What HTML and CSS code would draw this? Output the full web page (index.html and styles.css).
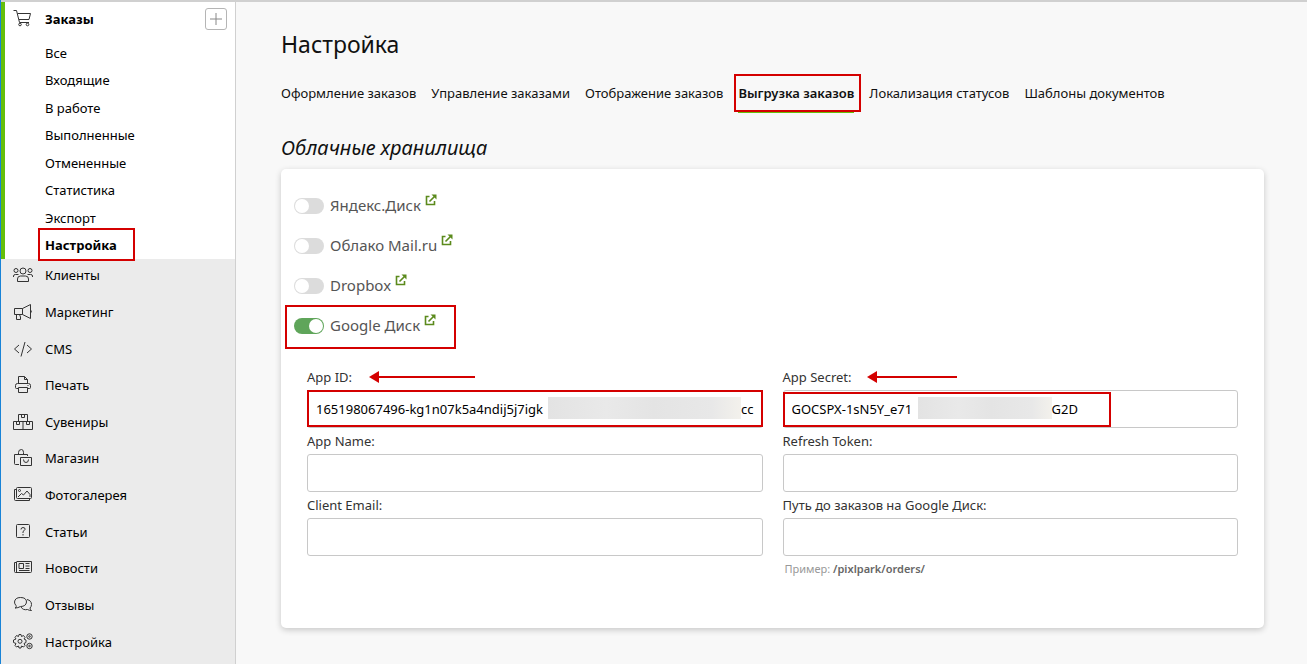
FILE: index.html
```html
<!DOCTYPE html>
<html lang="ru">
<head>
<meta charset="utf-8">
<title>Настройка</title>
<link rel="stylesheet" href="styles.css">
</head>
<body>
<svg class="sprite" aria-hidden="true">
  <symbol id="external" viewBox="0 0 12 12"><path d="M4.500 2.500H1.500V10.500H9.500V7M4.500 7.500L10 2" fill="none" stroke="currentColor" stroke-width="1.600"/><path d="M6.500 .5H11.500V5.500Z" fill="currentColor"/></symbol>
  <symbol id="arrow" viewBox="0 0 106 12"><path d="M8 6H106" stroke="currentColor" stroke-width="2"/><path d="M0 6L10 0V12Z" fill="currentColor"/></symbol>
  <symbol id="arrow-short" viewBox="0 0 90 12"><path d="M8 6H90" stroke="currentColor" stroke-width="2"/><path d="M0 6L10 0V12Z" fill="currentColor"/></symbol>
</svg>
<div class="app">
  <nav class="sidebar">
    <section class="orders">
      <div class="orders-head">
        <svg class="icon" viewBox="0 0 20 20"><path d="M.5 1.500H3.500L6.500 13.500H16M4.500 4.500H17.500L16 10.500H6"/><circle cx="7" cy="15.500" r="1.300"/><circle cx="14.500" cy="15.500" r="1.300"/></svg>
        <a class="orders-title" href="#">Заказы</a>
        <button class="add" type="button" aria-label="Добавить"><svg viewBox="0 0 12 12"><path d="M6 0V12M0 6H12"/></svg></button>
      </div>
      <ul class="submenu">
        <li><a href="#">Все</a></li>
        <li><a href="#">Входящие</a></li>
        <li><a href="#">В работе</a></li>
        <li><a href="#">Выполненные</a></li>
        <li><a href="#">Отмененные</a></li>
        <li><a href="#">Статистика</a></li>
        <li><a href="#">Экспорт</a></li>
        <li><a class="current marked" href="#">Настройка</a></li>
      </ul>
    </section>
    <ul class="menu">
      <li><a href="#"><svg class="icon" viewBox="0 0 20 20"><circle cx="10" cy="6" r="3"/><circle cx="3" cy="5.500" r="2"/><circle cx="17" cy="5.500" r="2"/><path d="M4.500 16.500V14Q4.500 11 7.500 11H12.500Q15.500 11 15.500 14V16.500ZM.5 12V11Q.5 9.500 2.500 9.500H5.500M14.500 9.500H17.500Q19.500 9.500 19.500 11V12"/></svg>Клиенты</a></li>
      <li><a href="#"><svg class="icon" viewBox="0 0 20 20"><path d="M1.500 6.500H9.500L17.500 2.500V16.500L9.500 12.500H1.500ZM9.500 6.500V12.500M17.500 8Q19.500 9.500 17.500 11M3.500 12.500V17.500H7.500V15L6.500 12.500"/></svg>Маркетинг</a></li>
      <li><a href="#"><svg class="icon" viewBox="0 0 20 20"><path d="M6 6L1.500 10L6 14M14 6L18.500 10L14 14M12 3L8 17.500"/></svg>CMS</a></li>
      <li><a href="#"><svg class="icon" viewBox="0 0 20 20"><path d="M5.500 8.500V1.500H11.500L14.500 4.500V8.500M11.500 1.500V4.500H14.500M5 13.500H3.500Q2.500 13.500 2.500 12.500V10.500Q2.500 8.500 4.500 8.500H15.500Q17.500 8.500 17.500 10.500V12.500Q17.500 13.500 16.500 13.500H15M5.500 12.500H14.500V17.500H5.500ZM14.500 10.500H15.500"/></svg>Печать</a></li>
      <li><a href="#"><svg class="icon" viewBox="0 0 20 20"><path d="M.5 9.500H19.500V17.500H.5ZM10 9.500V17.500M5.500 9.500V2.500H14.500V9.500M8.500 2.500V5.500H11.500V2.500M3.500 9.500V12.500H6.500V9.500M13.500 9.500V12.500H16.500V9.500"/></svg>Сувениры</a></li>
      <li><a href="#"><svg class="icon" viewBox="0 0 20 20"><path d="M6 16.500H2.500Q1.500 16.500 1.500 15.500V6.500H14.500V8M5.500 6.500V4.500Q5.500 1.500 8.500 1.500Q10.500 1.500 10.500 4.500V6M7.500 9.500H18.500V17.500H7.500ZM10.500 11.500Q10.500 14.500 13 14.500Q15.500 14.500 15.500 11.500"/></svg>Магазин</a></li>
      <li><a href="#"><svg class="icon" viewBox="0 0 20 20"><path d="M4.500 2.500H17.500Q18.500 2.500 18.500 3.500V12.500Q18.500 13.500 17.500 13.500H4.500Q3.500 13.500 3.500 12.500V3.500Q3.500 2.500 4.500 2.500M3 4.500H1.500V14.500Q1.500 15.500 2.500 15.500H16.500V14M5 12L8.500 8.500L10.500 10L14 6L17 9.500V12"/><circle cx="6.500" cy="5.500" r="1"/></svg>Фотогалерея</a></li>
      <li><a href="#"><svg class="icon" viewBox="0 0 20 20"><rect x="3.500" y="2.500" width="13" height="13" rx="1"/><path d="M8 7.500Q8 5.500 10 5.500Q12.500 5.500 12 7.500Q11.500 8.500 10 9.500V11M10 12V13.500"/></svg>Статьи</a></li>
      <li><a href="#"><svg class="icon" viewBox="0 0 20 20"><path d="M3.500 3.500H18.500V13.500Q18.500 14.500 17.500 14.500H2.500Q1.500 14.500 1.500 13.500V4.500H3.500M3.500 4V14M6 5.500H10.500V10.500H6ZM12.500 5.500H16.500M12.500 8H16.500M12.500 10.500H16.500M6 12.500H16.500"/></svg>Новости</a></li>
      <li><a href="#"><svg class="icon" viewBox="0 0 20 20"><path d="M3 12.500Q3.500 11.500 3 10.500Q1.500 9 1.500 7Q2 2.500 7.500 2.500Q13.500 2.500 13.500 7Q13 11.500 7.500 11.500Q5 13 2 13ZM14 4.500Q18.500 5.500 18.500 9.500Q18.500 11.500 17 13Q17 14.500 18.500 15.500Q16 15.500 14.500 14.500Q10 15.500 8 12"/></svg>Отзывы</a></li>
      <li><a href="#"><svg class="icon" viewBox="0 0 20 20"><path d="M6 2.500H8L8.500 4.500L10.500 3.500L12 5.500L11 7L13 8V10.500L11 11.500L12 13.500L10.500 15L8.500 14L8 16H6L5.500 14L3.500 15L2 13.500L3 11.500L.5 10.500V8L3 7L2 5.500L3.500 3.500L5.500 4.500Z"/><circle cx="7" cy="9.300" r="2"/><circle cx="16.500" cy="4.500" r="2.700"/><circle cx="16.500" cy="4.500" r=".8"/><circle cx="16.500" cy="14" r="2.700"/><circle cx="16.500" cy="14" r=".8"/></svg>Настройка</a></li>
    </ul>
  </nav>
  <main class="main">
    <h1 class="title">Настройка</h1>
    <nav class="tabs">
      <a class="tab" href="#">Оформление заказов</a>
      <a class="tab" href="#">Управление заказами</a>
      <a class="tab" href="#">Отображение заказов</a>
      <a class="tab active" href="#">Выгрузка заказов</a>
      <a class="tab" href="#">Локализация статусов</a>
      <a class="tab" href="#">Шаблоны документов</a>
    </nav>
    <h2 class="subtitle">Облачные хранилища</h2>
    <form class="card">
      <div class="storage"><label><input class="switch" type="checkbox">Яндекс.Диск</label><a class="ext" href="#" aria-label="Яндекс.Диск"><svg><use href="#external"/></svg></a></div>
      <div class="storage"><label><input class="switch" type="checkbox">Облако Mail.ru</label><a class="ext" href="#" aria-label="Облако Mail.ru"><svg><use href="#external"/></svg></a></div>
      <div class="storage"><label><input class="switch" type="checkbox">Dropbox</label><a class="ext" href="#" aria-label="Dropbox"><svg><use href="#external"/></svg></a></div>
      <div class="storage chosen"><label><input class="switch" type="checkbox" checked>Google Диск</label><a class="ext" href="#" aria-label="Google Диск"><svg><use href="#external"/></svg></a></div>
      <div class="fields">
        <div class="field">
          <div class="label-row"><label for="app-id">App ID:</label><svg class="arrow"><use href="#arrow"/></svg></div>
          <div class="control outlined"><input class="value-id" id="app-id" type="text" value="165198067496-kg1n07k5a4ndij5j7igk"><span class="hidden-part"></span><span>cc</span></div>
        </div>
        <div class="field">
          <div class="label-row"><label for="app-secret">App Secret:</label><svg class="arrow short"><use href="#arrow-short"/></svg></div>
          <div class="control outlined part"><input class="value-secret" id="app-secret" type="text" value="GOCSPX-1sN5Y_e71"><span class="hidden-part small"></span><span>G2D</span></div>
        </div>
        <div class="field">
          <div class="label-row"><label for="app-name">App Name:</label></div>
          <input class="control" id="app-name" type="text">
        </div>
        <div class="field">
          <div class="label-row"><label for="token">Refresh Token:</label></div>
          <input class="control" id="token" type="text">
        </div>
        <div class="field">
          <div class="label-row"><label for="email">Client Email:</label></div>
          <input class="control" id="email" type="text">
        </div>
        <div class="field">
          <div class="label-row"><label for="path">Путь до заказов на Google Диск:</label></div>
          <input class="control" id="path" type="text">
          <p class="hint">Пример: <b>/pixlpark/orders/</b></p>
        </div>
      </div>
    </form>
  </main>
</div>
</body>
</html>
```
FILE: styles.css
```css
*, *::before, *::after { box-sizing: border-box; }
body {
  margin: 0;
  background: #f8f8f8;
  color: #111;
  font: 13px/20px "Noto Sans", "Open Sans", sans-serif;
}
a { color: inherit; text-decoration: none; }
ul { margin: 0; padding: 0; list-style: none; }
.sprite { display: none; }
.app {
  display: flex;
  min-height: 100vh;
  border-left: 1px solid #1883d7;
  box-shadow: inset 0 2px #d0d0d0;
  padding-top: 2px;
}
.sidebar {
  flex: none;
  width: 235px;
  background: #ebebeb;
  border-right: 1px solid #d0d0d0;
  color: #000;
}
.orders { background: #fff; border-left: 4px solid #66bf0b; }
.orders-head {
  display: flex;
  align-items: center;
  height: 34px;
  padding: 0 8px;
}
.icon {
  width: 20px;
  height: 20px;
  flex: none;
  margin-right: 12px;
  fill: none;
  stroke: #333;
  stroke-width: 1;
}
.orders-title { flex: 1; font-weight: 700; }
.add {
  display: grid;
  place-items: center;
  width: 22px;
  height: 22px;
  padding: 0;
  background: #fff;
  border: 1px solid #b5b5b5;
  border-radius: 3px;
}
.add svg { width: 12px; height: 12px; stroke: #888; }
.submenu {
  display: grid;
  grid-auto-rows: 1fr;
  align-items: center;
  height: 223px;
  padding: 3px 0 0 40px;
}
.current { font-weight: 700; }
.marked { position: relative; }
.marked::before {
  content: "";
  position: absolute;
  inset: -8px -18px -7px -7px;
  border: 2px solid #d40000;
}
.menu {
  display: grid;
  grid-auto-rows: 1fr;
  height: 403px;
}
.menu a {
  display: flex;
  align-items: center;
  height: 100%;
  padding: 0 0 4px 12px;
}
.main { flex: 1; min-width: 0; padding: 26px 43px 35px 45px; }
.title { margin: 0; font-size: 23px; line-height: 32px; font-weight: 400; }
.tabs { display: flex; gap: 15px; margin-top: 15px; }
.tab { line-height: 36px; white-space: nowrap; }
.active {
  position: relative;
  font-weight: 600;
  border-bottom: 2px solid #66bf0b;
}
.active::before {
  content: "";
  position: absolute;
  inset: -1px -7px -1px -4px;
  border: 2px solid #d40000;
}
.subtitle {
  margin: 21px 0 7px;
  font-size: 20px;
  line-height: 28px;
  font-style: italic;
  font-weight: 400;
}
.card {
  padding: 16px 26px 50px 13px;
  background: #fff;
  border-radius: 5px;
  box-shadow: 0 2px 6px rgba(0, 0, 0, .2);
}
.storage {
  display: flex;
  height: 40px;
  color: #555;
  font-size: 15px;
  line-height: 40px;
}
.storage label { display: flex; align-items: center; gap: 6px; }
.switch {
  appearance: none;
  width: 30px;
  height: 16px;
  margin: 2px 0 0;
  padding: 1px;
  border-radius: 8px;
  background: #dcdcdc;
}
.switch::before {
  content: "";
  display: block;
  width: 14px;
  height: 14px;
  border-radius: 7px;
  background: #fff;
}
.switch:checked { background: #5fa55a; }
.switch:checked::before { margin-left: auto; }
.ext { margin: 9px 0 0 4px; color: #5b8a1c; line-height: 0; }
.ext svg { width: 12px; height: 12px; }
.chosen { position: relative; }
.chosen::after {
  content: "";
  position: absolute;
  left: -9px;
  top: 0;
  width: 171px;
  height: 44px;
  border: 2px solid #d40000;
  pointer-events: none;
}
.fields {
  display: grid;
  grid-template-columns: repeat(2, minmax(0, 1fr));
  column-gap: 20px;
  margin: 19px 0 0 13px;
}
.label-row { display: flex; height: 26px; align-items: center; color: #333; }
.arrow { width: 106px; height: 12px; margin-left: 17px; color: #d40000; }
.short { width: 90px; margin-left: 15px; }
.control {
  display: flex;
  align-items: center;
  width: 100%;
  height: 38px;
  padding: 0 8px;
  border: 1px solid #c8c8c8;
  border-radius: 3px;
  background: #fff;
  color: #000;
  font: inherit;
}
.control input {
  flex: none;
  padding: 0;
  border: 0;
  background: none;
  color: #000;
  font: inherit;
}
.value-id { width: 232px; }
.value-secret { width: 126px; }
.hidden-part {
  width: 194px;
  height: 22px;
  margin-bottom: 3px;
  background: linear-gradient(90deg, #e3e3e3, #e9e9e9 30%, #e4e4e4 55%, #e8e8e8 85%, #f3f1ec);
}
.small { width: 134px; }
.outlined { position: relative; }
.outlined::after {
  content: "";
  position: absolute;
  inset: -1px -1px 0;
  border: 2px solid #d40000;
  pointer-events: none;
}
.part::after { right: auto; width: 328px; top: 1px; }
.hint { margin: 4px 2px 0; color: #999; font-size: 11px; line-height: 18px; }
.hint b { font-weight: 600; color: #666; }
```
